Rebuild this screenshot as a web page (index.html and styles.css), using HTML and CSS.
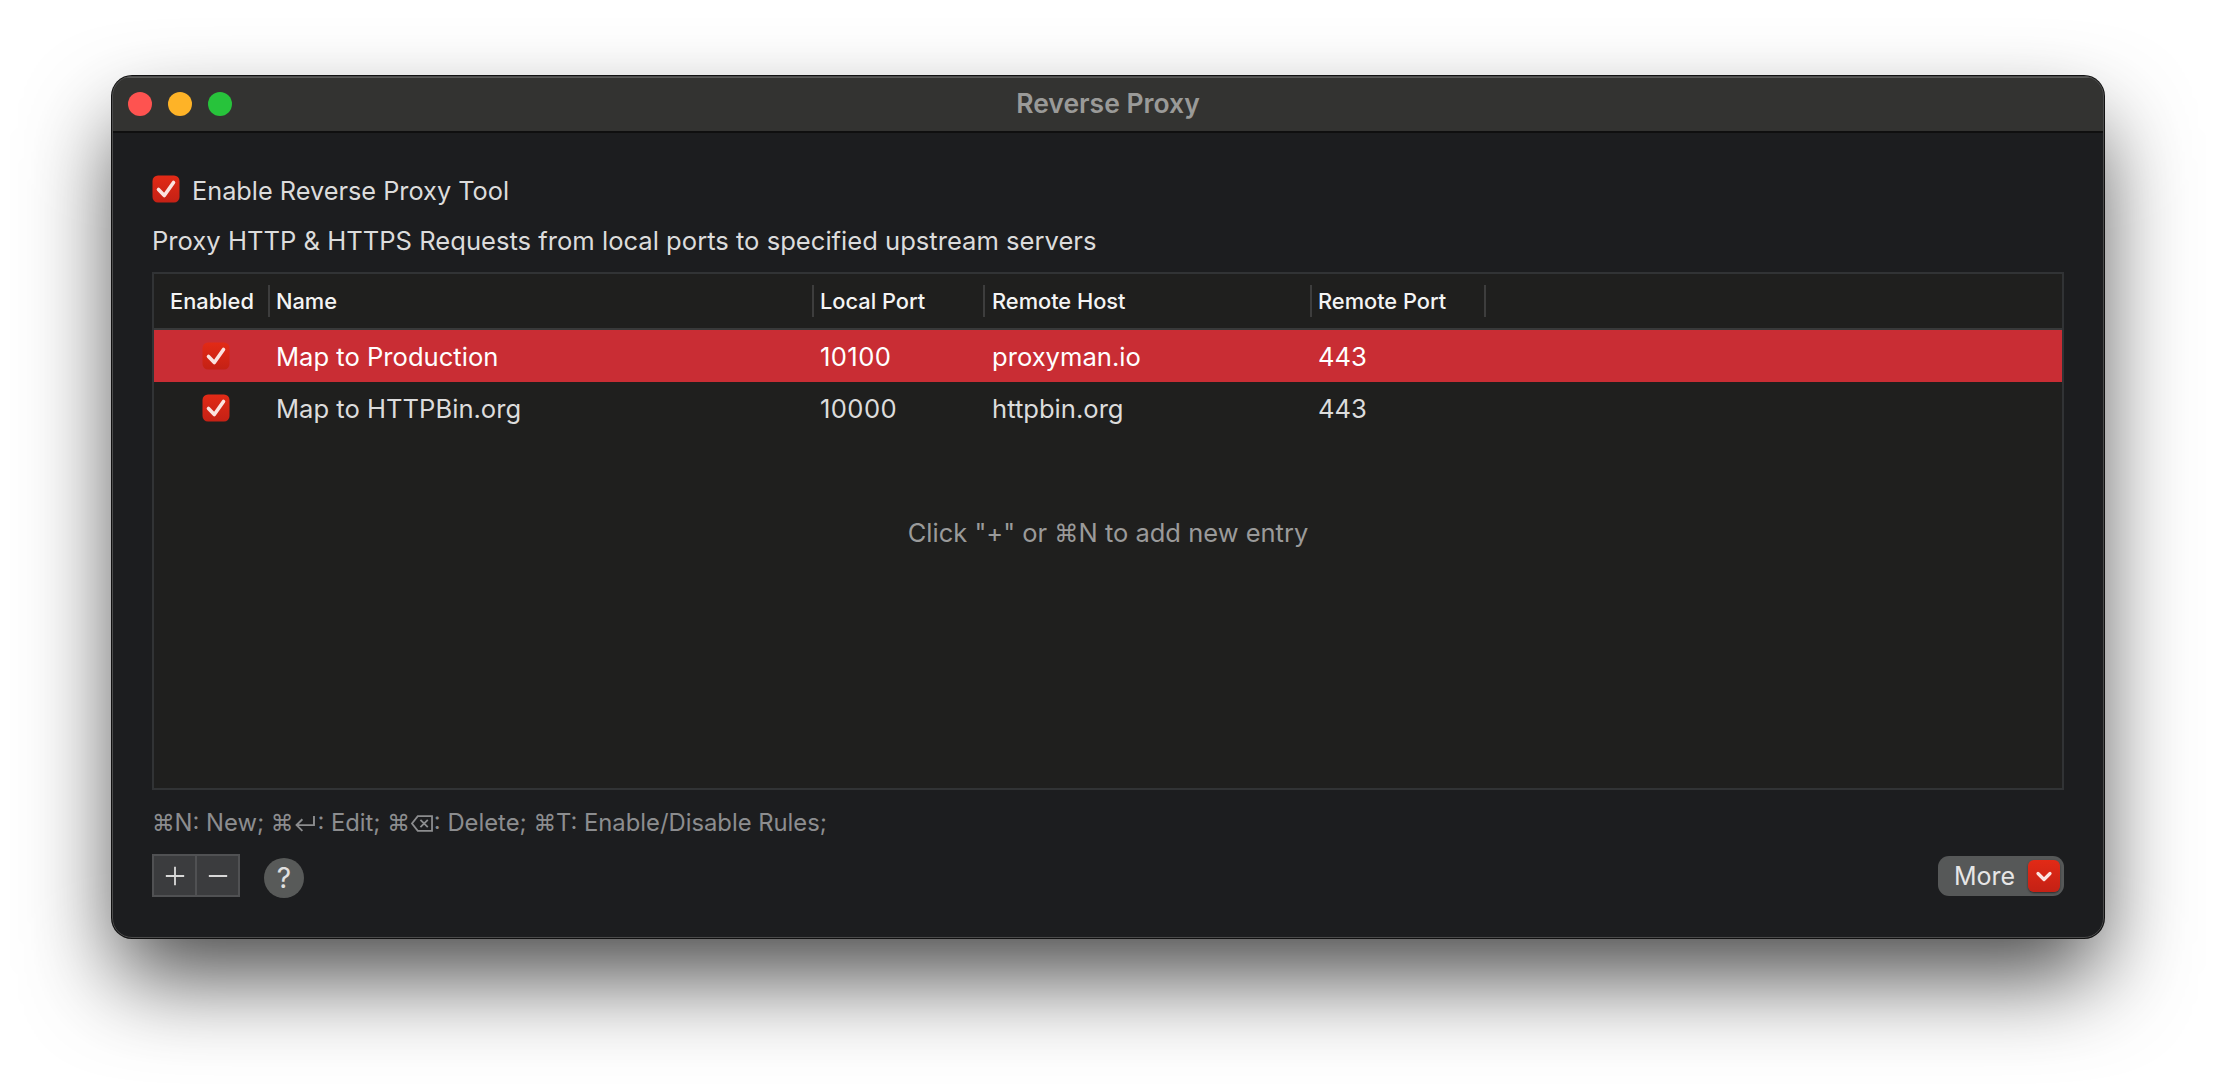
FILE: index.html
```
<!DOCTYPE html>
<html lang="en">
<head>
<meta charset="utf-8">
<title>Reverse Proxy</title>
<link rel="stylesheet" href="styles.css">
</head>
<body>
<svg class="defs" width="0" height="0" aria-hidden="true">
  <defs>
    <linearGradient id="redfill" x1="0" y1="0" x2="0" y2="1">
      <stop offset="0" stop-color="#e22a16"/>
      <stop offset="1" stop-color="#c42115"/>
    </linearGradient>
    <symbol id="check" viewBox="0 0 28 28">
      <rect x="0.5" y="0.5" width="27" height="27" rx="5.5" fill="url(#redfill)"/>
      <path d="M6.500 14.500 L12.300 20.500 L21.500 7.500" fill="none" stroke="#fbe3e0" stroke-width="3.600" stroke-linecap="round" stroke-linejoin="round"/>
    </symbol>
  </defs>
</svg>
<main class="window">
  <header class="titlebar">
    <div class="lights">
      <span class="light light-close"></span>
      <span class="light light-min"></span>
      <span class="light light-max"></span>
    </div>
    <div class="title">Reverse Proxy</div>
  </header>
  <section class="content">
    <label class="enable">
      <svg class="box"><use href="#check"/></svg>
      <span class="enable-text">Enable Reverse Proxy Tool</span>
    </label>
    <p class="desc">Proxy HTTP &amp; HTTPS Requests from local ports to specified upstream servers</p>
    <div class="table">
      <div class="thead">
        <div class="th c1">Enabled</div>
        <div class="th c2">Name</div>
        <div class="th c3">Local Port</div>
        <div class="th c4">Remote Host</div>
        <div class="th c5">Remote Port</div>
      </div>
      <div class="row selected">
        <div class="td c1 cbcell"><svg class="box"><use href="#check"/></svg></div>
        <div class="td c2">Map to Production</div>
        <div class="td c3">10100</div>
        <div class="td c4">proxyman.io</div>
        <div class="td c5">443</div>
      </div>
      <div class="row">
        <div class="td c1 cbcell"><svg class="box"><use href="#check"/></svg></div>
        <div class="td c2">Map to HTTPBin.org</div>
        <div class="td c3">10000</div>
        <div class="td c4">httpbin.org</div>
        <div class="td c5">443</div>
      </div>
      <div class="empty">Click "+" or <span class="sym">⌘</span>N to add new entry</div>
    </div>
    <p class="hint"><span class="sym">⌘</span>N: New; <span class="sym">⌘</span><svg class="glyph" viewBox="0 0 22 18"><path d="M19.500 2v8.500H3M8.500 5 3 10.500 8.500 16" fill="none" stroke="currentColor" stroke-width="1.800"/></svg>: Edit; <span class="sym">⌘</span><svg class="glyph" viewBox="0 0 22 18"><path d="M7 2h13.500v14H7L1.500 9zM9.500 5.500l7 7M16.500 5.500l-7 7" fill="none" stroke="currentColor" stroke-width="1.700"/></svg>: Delete; <span class="sym">⌘</span>T: Enable/Disable Rules;</p>
    <div class="toolbar">
      <div class="addremove">
        <button class="seg" type="button"><svg viewBox="0 0 24 24" class="segicon"><path d="M12 2v20M2 12h20" stroke="#d8d8d8" stroke-width="2" fill="none"/></svg></button>
        <button class="seg" type="button"><svg viewBox="0 0 24 24" class="segicon"><path d="M2 12h20" stroke="#d8d8d8" stroke-width="2" fill="none"/></svg></button>
      </div>
      <button class="help" type="button">?</button>
      <button class="more" type="button">
        <span>More</span>
        <span class="chev"><svg viewBox="0 0 32 32"><path d="M10 13.500 16 19.500 22 13.500" fill="none" stroke="#fbe3e0" stroke-width="3.200" stroke-linecap="round" stroke-linejoin="round"/></svg></span>
      </button>
    </div>
  </section>
</main>
</body>
</html>
```
FILE: styles.css
```
* { box-sizing: border-box; }
html, body { margin: 0; height: 100%; }
body {
  width: 2216px;
  height: 1086px;
  overflow: hidden;
  background: #fff;
  padding: 76px 0 0 112px;
  font-family: Inter, "Noto Sans", "DejaVu Sans", sans-serif;
}
.defs { position: absolute; }
.window {
  width: 1992px;
  height: 862px;
  border-radius: 20px;
  background: #1c1d1f;
  box-shadow:
    0 0 0 1px #111,
    0 44px 90px -6px rgba(0,0,0,.72);
  overflow: hidden;
  display: flex;
  flex-direction: column;
  position: relative;
}
.window::after {
  content: "";
  position: absolute;
  inset: 0;
  border-radius: 20px;
  border: 1.500px solid #4c4c4c;
  pointer-events: none;
}
.titlebar {
  height: 57px;
  flex: none;
  background: #333331;
  border-bottom: 2px solid #0f0f0f;
  box-shadow: inset 0 2px 0 #5a5a58;
  display: flex;
  align-items: center;
  position: relative;
  padding-left: 16px;
}
.lights { display: flex; gap: 16px; }
.light { width: 24px; height: 24px; border-radius: 50%; }
.light-close { background: #fe5350; }
.light-min { background: #feb327; }
.light-max { background: #27c33b; }
.title {
  position: absolute;
  left: 0;
  right: 0;
  top: 12px;
  text-align: center;
  color: #9a9a98;
  font-size: 26.500px;
  font-weight: 600;
  line-height: 30px;
}
.content {
  flex: 1;
  padding: 42px 40px 0;
  display: flex;
  flex-direction: column;
}
.box { width: 28px; height: 28px; display: block; flex: none; }
.enable {
  display: flex;
  align-items: center;
  gap: 12px;
  height: 28px;
  color: #dcdcdc;
  font-size: 25.300px;
  line-height: 28px;
}
.enable-text { padding-top: 3px; }
.desc {
  margin: 23px 0 0;
  color: #dcdcdc;
  font-size: 25.600px;
  line-height: 30px;
}
.table {
  margin-top: 16px;
  height: 518px;
  width: 1912px;
  flex: none;
  border: 2px solid #313335;
  background: #1f1f1e;
  position: relative;
  display: flex;
  flex-direction: column;
}
.thead {
  height: 56px;
  flex: none;
  border-bottom: 2px solid #38393a;
  display: flex;
  align-items: center;
  color: #f4f4f4;
  font-size: 21.800px;
  font-weight: 500;
}
.th { height: 32px; line-height: 32px; border-right: 2px solid #3d3d3d; flex: none; padding-left: 6px; }
.row {
  height: 52px;
  flex: none;
  display: flex;
  align-items: center;
  color: #dcdcdc;
  font-size: 25.600px;
}
.selected { background: #c92d34; color: #fff; }
.c1 { width: 116px; }
.c2 { width: 544px; }
.c3 { width: 171px; }
.c4 { width: 327px; }
.c5 { width: 174px; }
.th.c1 { padding-left: 16px; white-space: nowrap; }
.td.c2, .td.c3, .td.c5 { padding-left: 6px; }
.td.c3 { letter-spacing: .4px; }
.td.c4, .th.c4 { padding-left: 7px; }
.td.cbcell { padding-left: 48px; }
.empty {
  position: absolute;
  left: 0;
  right: 0;
  top: 244px;
  text-align: center;
  color: #9a9a9a;
  font-size: 25.500px;
  line-height: 30px;
}
.sym { font-family: "DejaVu Sans", sans-serif; font-size: .95em; }
.hint {
  margin: 19px 0 0;
  color: #8c8d8f;
  font-size: 23.800px;
  line-height: 28px;
  white-space: nowrap;
}
.glyph { width: 24px; height: 19px; vertical-align: -2px; }
.toolbar {
  margin-top: 17px;
  height: 44px;
  display: flex;
  align-items: flex-start;
}
.addremove { display: flex; height: 43px; }
.seg {
  width: 44px;
  height: 43px;
  padding: 0;
  border: 2px solid #505153;
  background: #3b3c3e;
  display: flex;
  align-items: center;
  justify-content: center;
}
.seg + .seg { border-left-width: 1px; }
.seg:first-child { border-right-width: 1px; }
.segicon { width: 22px; height: 22px; }
.help {
  margin: 4px 0 0 24px;
  width: 40px;
  height: 40px;
  border-radius: 50%;
  padding: 0;
  border: none;
  background: #585a59;
  color: #e0e0e0;
  font: 400 28px/40px Inter, sans-serif;
}
.more {
  margin: 2px 0 0 auto;
  width: 126px;
  height: 40px;
  border: none;
  border-radius: 11px;
  background: #565858;
  color: #e6e6e6;
  font: 400 25px/40px Inter, sans-serif;
  display: flex;
  align-items: center;
  justify-content: space-between;
  padding: 0 4px 0 16px;
}
.chev {
  width: 32px;
  height: 32px;
  border-radius: 6px;
  background: linear-gradient(#e22a16, #c42115);
  box-shadow: 0 1px 2px rgba(0,0,0,.5);
  display: block;
}
.chev svg { width: 32px; height: 32px; display: block; }
```
